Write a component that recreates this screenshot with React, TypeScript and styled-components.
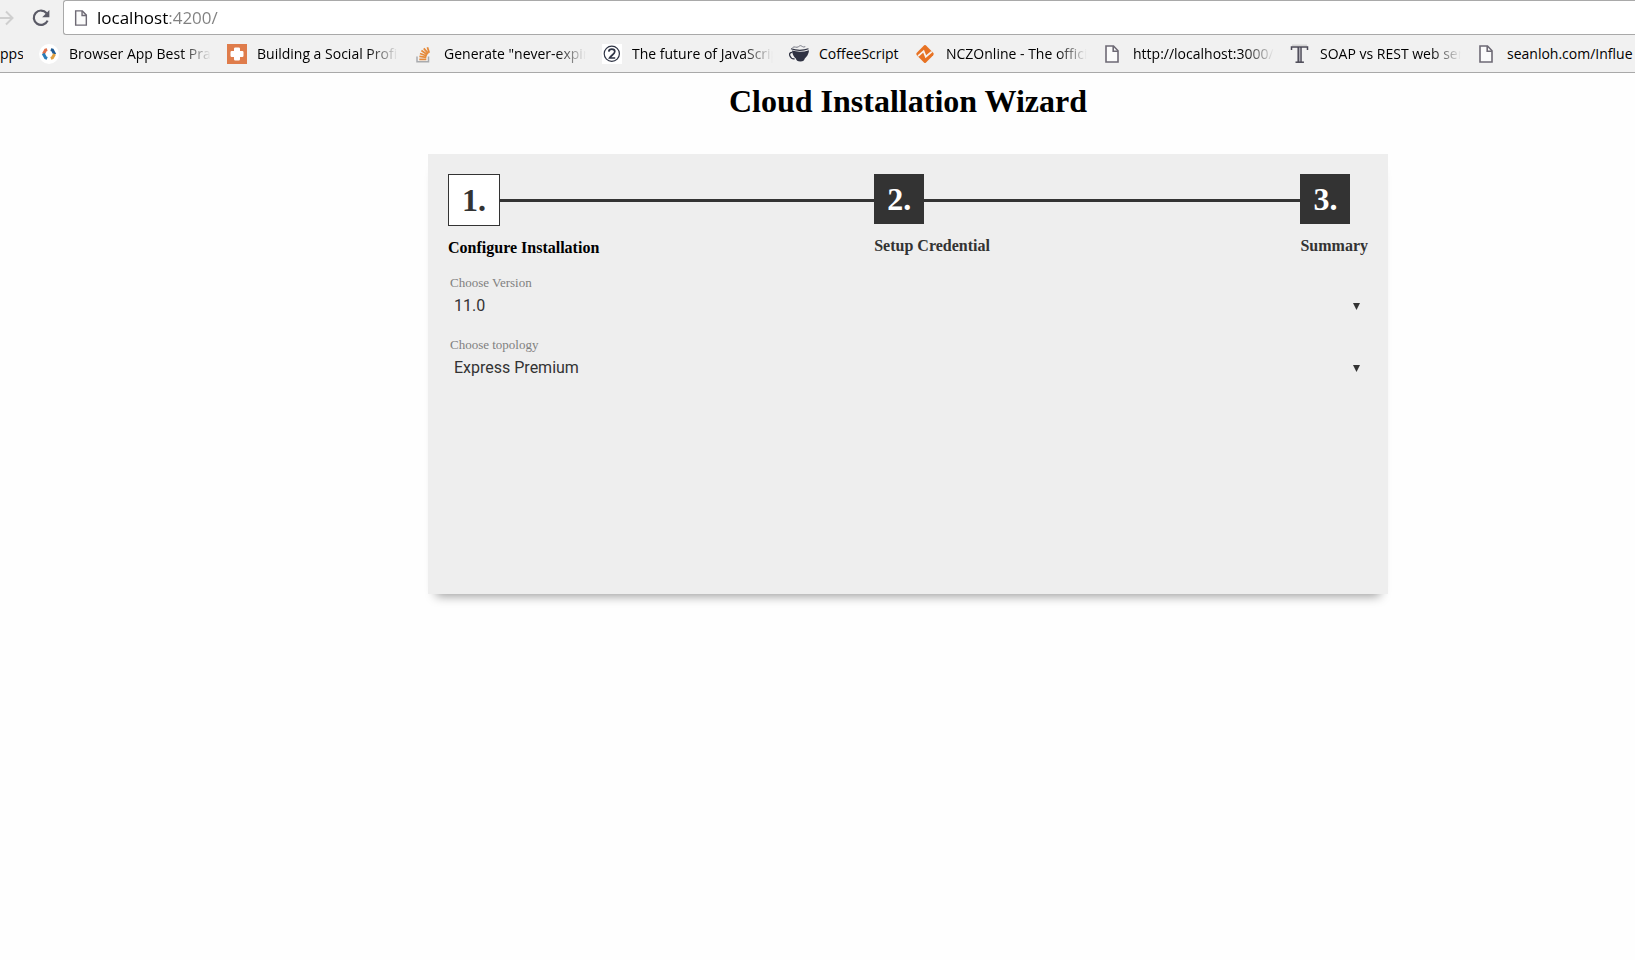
import React, { useState } from "react";
import styled, { createGlobalStyle } from "styled-components";

const GlobalStyle = createGlobalStyle`
  *, *::before, *::after { box-sizing: border-box; }
  body {
    margin: 0;
    background: #fefefe;
    font-family: "Liberation Serif", "Times New Roman", serif;
  }
`;

/* ---------- browser chrome ---------- */

const Chrome = styled.header`
  background: #f1f1f1;
  border-bottom: 1px solid #a9a9a9;
  font-family: "Open Sans", "Segoe UI", sans-serif;
  overflow: hidden;
`;

const Toolbar = styled.div`
  display: flex;
  align-items: center;
  height: 35px;
`;

const ToolButton = styled.button<{ $width: number }>`
  flex: none;
  display: flex;
  align-items: center;
  width: ${(p) => p.$width}px;
  height: 20px;
  padding: 0;
  border: 0;
  background: none;
`;

const AddressBar = styled.label`
  flex: 1;
  display: flex;
  align-items: center;
  gap: 9px;
  height: 35px;
  padding-left: 10px;
  background: #fff;
  border: 1px solid #a9a9a9;
  border-right: 0;
  border-radius: 3px 0 0 3px;
`;

const AddressInput = styled.input`
  flex: 1;
  height: 30px;
  padding: 0;
  border: 0;
  outline: 0;
  font: 17px/30px "Open Sans", "Segoe UI", sans-serif;
  color: transparent;
  background: linear-gradient(to right, #000 72px, #808080 72px);
  background-clip: text;
  -webkit-background-clip: text;
`;

const BookmarkBar = styled.nav`
  display: flex;
  align-items: center;
  gap: 16px;
  height: 37px;
`;

const Bookmark = styled.a<{ $width?: number }>`
  flex: none;
  display: flex;
  align-items: center;
  gap: 10px;
  width: ${(p) => (p.$width ? `${p.$width}px` : "auto")};
  color: #000;
  font-size: 14px;
  line-height: 20px;
  text-decoration: none;

  &:last-child { flex: 0 1 auto; min-width: 0; }
  svg { flex: none; }
`;

const BookmarkTitle = styled.span<{ $fade?: boolean }>`
  flex: 1;
  overflow: hidden;
  white-space: nowrap;
  mask-image: ${(p) =>
    p.$fade ? "linear-gradient(to left, transparent, #000 30px)" : "none"};
`;

/* ---------- wizard ---------- */

const Main = styled.main`
  padding: 10px 0 40px 181px;
  display: flex;
  justify-content: center;
`;

const Wizard = styled.div`
  width: 100%;
  max-width: 960px;
`;

const Title = styled.h1`
  margin: 0 0 34px;
  font-size: 32px;
  line-height: 37px;
  text-align: center;
`;

const Panel = styled.section`
  min-height: 440px;
  padding: 20px;
  background: #eee;
  box-shadow: 0 10px 10px -8px rgba(0, 0, 0, 0.4);
`;

const Steps = styled.ol`
  display: grid;
  grid-template-columns: 1fr 1fr auto;
  margin: 0 0 18px;
  padding: 0;
  list-style: none;
`;

const Step = styled.li<{ $active: boolean }>`
  color: ${(p) => (p.$active ? "#000" : "#333")};
  font-size: 16px;
  line-height: 18px;
  font-weight: bold;
`;

const StepTrack = styled.div`
  display: flex;
  align-items: flex-start;
  margin-bottom: 13px;
`;

const StepNumber = styled.button<{ $active: boolean }>`
  flex: none;
  width: ${(p) => (p.$active ? 52 : 50)}px;
  height: ${(p) => (p.$active ? 52 : 50)}px;
  padding: 0;
  border: ${(p) => (p.$active ? "1px solid #333" : "0")};
  background: ${(p) => (p.$active ? "#fff" : "#333")};
  color: ${(p) => (p.$active ? "#333" : "#fff")};
  font: bold 32px/50px "Liberation Serif", "Times New Roman", serif;
`;

const StepLine = styled.span`
  flex: 1;
  height: 3px;
  margin-top: 25px;
  background: #333;
`;

const Fields = styled.form`
  display: grid;
  gap: 19px;
`;

const Field = styled.div`
  display: grid;
  gap: 4px;
  padding: 0 2px;
`;

const FieldLabel = styled.label`
  color: #808080;
  font-size: 13px;
  line-height: 15px;
`;

const SelectBox = styled.div`
  display: grid;
  align-items: center;

  > * { grid-area: 1 / 1; }
  > svg {
    justify-self: end;
    margin-right: 6px;
    pointer-events: none;
  }
`;

const Select = styled.select`
  appearance: none;
  width: 100%;
  height: 24px;
  padding: 0 4px;
  border: 0;
  background: none;
  color: #333;
  font: 16px/24px Roboto, sans-serif;
`;

/* ---------- icons ---------- */

const ForwardIcon = () => (
  <svg width="14" height="18" viewBox="0 0 14 18" fill="none" stroke="#cfcfcf" strokeWidth="2">
    <path d="M0 9h12.5M6 2.5 12.5 9 6 15.5" />
  </svg>
);

const ReloadIcon = () => (
  <svg width="18" height="18" viewBox="0 0 18 18">
    <path d="M14.6 4.2A7.2 7.2 0 1 0 15.6 11.6" fill="none" stroke="#5a5a66" strokeWidth="2.2" />
    <path d="M17.4 1v7.2h-7.2z" fill="#5a5a66" />
  </svg>
);

const PageIcon = ({ width = 20, height = 20 }: { width?: number; height?: number }) => (
  <svg width={width} height={height} viewBox={width === 20 ? "1 0 20 20" : "3 1 14 18"} fill="none" stroke="#6e6a75" strokeWidth="1.6">
    <path d="M4 2h7.5L16 6.8V18H4z" fill="#fbfbfb" />
    <path d="M11.2 2v5.2H16" />
  </svg>
);

const CodeIcon = () => (
  <svg width="20" height="20" viewBox="0 0 20 20" fill="none" strokeWidth="3">
    <circle cx="10" cy="10" r="10" fill="#fff" />
    <path d="M8.2 5.6 6.6 6 4.4 10" stroke="#e0704a" />
    <path d="M4.2 9.6 6.6 13.8 8.2 14.4" stroke="#2a7cb8" />
    <path d="M11.8 5.6 13.4 6 15.8 10.4" stroke="#1d5a94" />
    <path d="M15.6 10 13.4 13.8 11.8 14.4" stroke="#e0a040" />
  </svg>
);

const PlusIcon = () => (
  <svg width="20" height="20" viewBox="0 0 20 20">
    <path d="M0 0h20v20H0z" fill="#df7c4b" />
    <path d="M8.200 3.500h3.600q1.200 0 1.200 1.200V7h2.300q1.200 0 1.200 1.200v3.600q0 1.200-1.200 1.200H13v2.300q0 1.200-1.200 1.200H8.200Q7 16.500 7 15.300V13H4.700q-1.200 0-1.200-1.200V8.200Q3.500 7 4.700 7H7V4.700q0-1.200 1.200-1.200z" fill="#fff" />
  </svg>
);

const StackIcon = () => (
  <svg width="20" height="20" viewBox="0 0 20 20" fill="none">
    <path d="M3 12.500v5.200h11.500v-5.200" stroke="#a9abae" strokeWidth="1.500" />
    <path d="M5.300 15.400h7M5.400 12.400l7 1M6 9.500l6.800 2.500M7.400 6.600l6 4.200M9.800 4.300l4.500 5.300M13.400 3.200l1.800 5.600" stroke="#e58b3c" strokeWidth="1.800" />
  </svg>
);

const TwoIcon = () => (
  <svg width="20" height="20" viewBox="0 0 20 20" fill="none" stroke="#2e3344">
    <path d="M0 0h20v20H0z" fill="#fff" stroke="none" />
    <circle cx="9.800" cy="9.800" r="7.600" strokeWidth="1.200" />
    <path d="M6.800 7.600C6.900 5.800 8.100 5.200 9.800 5.200c1.900 0 3 .9 3 2.400 0 2.400-3.600 3.600-5.200 6.400h5.600" strokeWidth="1.700" />
  </svg>
);

const CupIcon = () => (
  <svg width="20" height="20" viewBox="0 0 20 20" fill="none" stroke="#2f3242">
    <path d="M3.500 3.500c2-1.600 4 .8 6-.8s2-1 3.200-.6.800 1.400 3.600.6" strokeWidth="1" stroke="#777985" />
    <path d="M2 4.800q9 3 17.500 0" strokeWidth="1.200" />
    <path d="M3 6.600q8.500 2.400 17-.4c-.4 4.800-2.800 6.800-4.200 8.400-.6 1.800-1.400 3-4.400 3s-4-1.200-4.600-3C5 13 3.400 10.800 3 6.600z" fill="#2f3242" stroke="none" />
    <path d="M3.400 8.400C1 8.200.2 9.800.8 11.600s2.600 3.400 4.800 3.200" strokeWidth="1.300" />
  </svg>
);

const DiamondIcon = () => (
  <svg width="20" height="20" viewBox="0 0 20 20">
    <path d="M8.200 1.200q.8-.6 1.600 0l7.400 7.600q1 1.200 0 2.400l-7.400 7.600q-.8.600-1.600 0L.8 11.200q-1-1.200 0-2.400z" fill="#e77223" />
    <path d="M2 12.200 7.600 7.200 9.800 12.800 15.800 7.600" fill="none" stroke="#f8f3ee" strokeWidth="1.800" />
  </svg>
);

const SerifTIcon = () => (
  <svg width="20" height="20" viewBox="0 0 20 20" fill="none" stroke="#4a4855">
    <path d="M2 1.200h15" stroke="#cfcfcf" strokeWidth="1.200" />
    <path d="M1.500 6V3h16v3" strokeWidth="1.500" />
    <path d="M8.200 3v15M11 3v15" strokeWidth="1.500" />
    <path d="M9.600 4v14" stroke="#a5a3ad" strokeWidth="1" />
    <path d="M5.500 18.200h8.400" strokeWidth="1.500" />
  </svg>
);

const DownArrow = () => (
  <svg width="7" height="7" viewBox="0 0 7 7" aria-hidden="true">
    <path d="M0 0h7L3.500 7z" fill="#333" />
  </svg>
);

/* ---------- data ---------- */

const bookmarks = [
  { title: "Browser App Best Practices", icon: <CodeIcon />, width: 172, fade: true },
  { title: "Building a Social Profile", icon: <PlusIcon />, width: 171, fade: true },
  { title: 'Generate "never-expiring', icon: <StackIcon />, width: 172, fade: true },
  { title: "The future of JavaScript", icon: <TwoIcon />, width: 171, fade: true },
  { title: "CoffeeScript", icon: <CupIcon />, width: 111, fade: false },
  { title: "NCZOnline - The official", icon: <DiamondIcon />, width: 171, fade: true },
  { title: "http://localhost:3000/", icon: <PageIcon />, width: 171, fade: true },
  { title: "SOAP vs REST web services", icon: <SerifTIcon />, width: 171, fade: true },
  { title: "seanloh.com/Influe", icon: <PageIcon />, width: 172, fade: false },
];

const steps = ["Configure Installation", "Setup Credential", "Summary"];

const fields = [
  { id: "version", label: "Choose Version", options: ["11.0"] },
  { id: "topology", label: "Choose topology", options: ["Express Premium"] },
];

export default function App() {
  const [current, setCurrent] = useState(0);

  return (
    <>
      <GlobalStyle />
      <Chrome>
        <Toolbar>
          <ToolButton $width={32} type="button" aria-label="Forward">
            <ForwardIcon />
          </ToolButton>
          <ToolButton $width={31} type="button" aria-label="Reload">
            <ReloadIcon />
          </ToolButton>
          <AddressBar>
            <PageIcon width={14} height={16} />
            <AddressInput aria-label="Address" defaultValue="localhost:4200/" />
          </AddressBar>
        </Toolbar>
        <BookmarkBar aria-label="Bookmarks">
          <Bookmark href="#" $width={23}>
            <BookmarkTitle>pps</BookmarkTitle>
          </Bookmark>
          {bookmarks.map((b) => (
            <Bookmark key={b.title} href="#" $width={b.width}>
              {b.icon}
              <BookmarkTitle $fade={b.fade}>{b.title}</BookmarkTitle>
            </Bookmark>
          ))}
        </BookmarkBar>
      </Chrome>
      <Main>
        <Wizard>
          <Title>Cloud Installation Wizard</Title>
          <Panel>
            <Steps>
              {steps.map((name, i) => (
                <Step key={name} $active={i === current}>
                  <StepTrack>
                    <StepNumber
                      type="button"
                      aria-label={`${i + 1}. ${name}`}
                      $active={i === current}
                      onClick={() => setCurrent(i)}
                    >
                      {i + 1}.
                    </StepNumber>
                    {i < steps.length - 1 && <StepLine />}
                  </StepTrack>
                  {name}
                </Step>
              ))}
            </Steps>
            <Fields>
              {fields.map((f) => (
                <Field key={f.id}>
                  <FieldLabel htmlFor={f.id}>{f.label}</FieldLabel>
                  <SelectBox>
                    <Select id={f.id}>
                      {f.options.map((o) => (
                        <option key={o}>{o}</option>
                      ))}
                    </Select>
                    <DownArrow />
                  </SelectBox>
                </Field>
              ))}
            </Fields>
          </Panel>
        </Wizard>
      </Main>
    </>
  );
}
